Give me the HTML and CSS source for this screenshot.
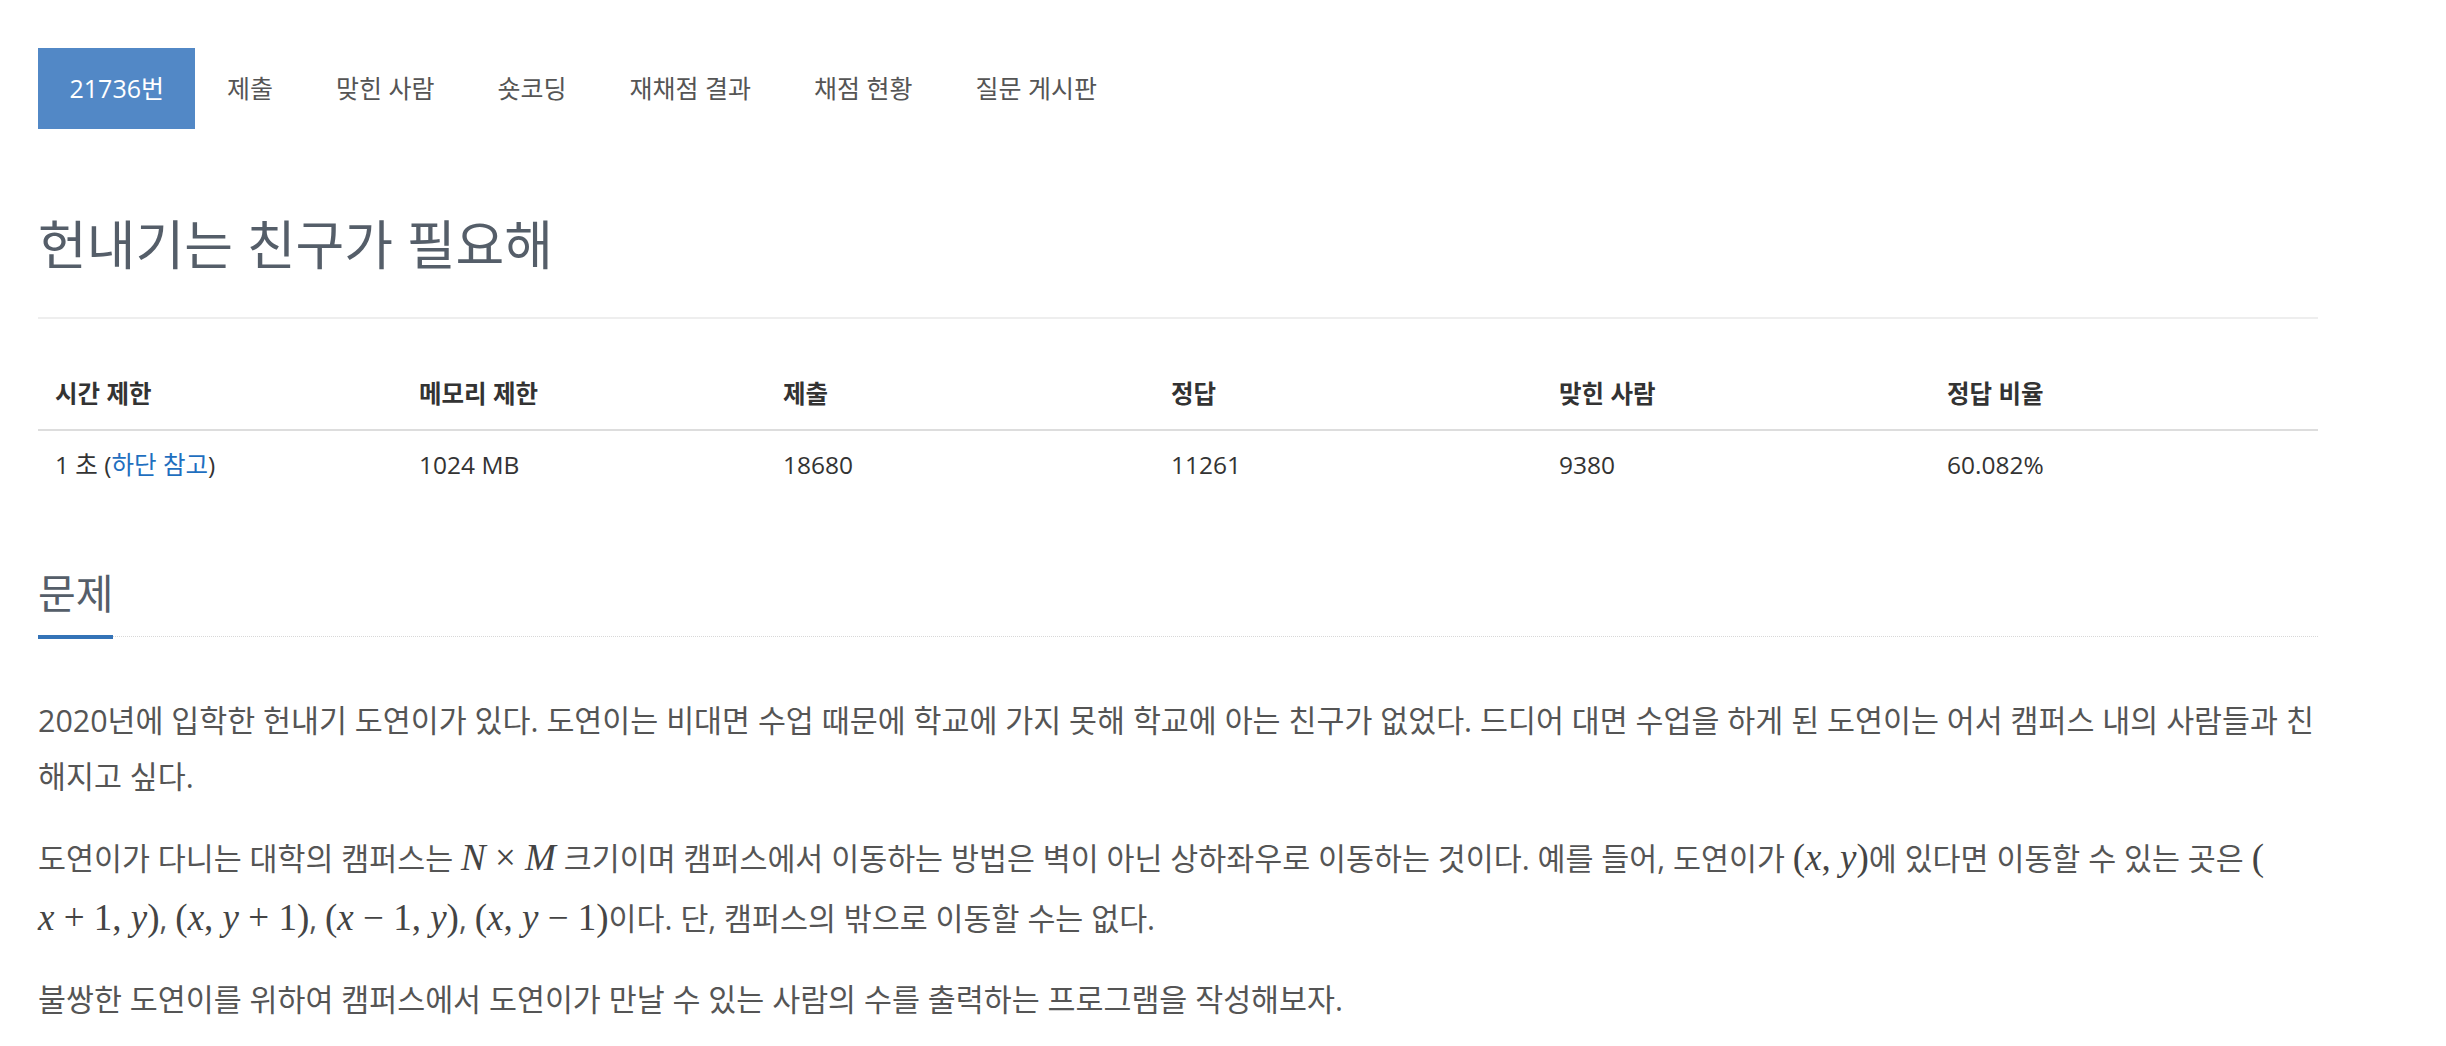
FILE: index.html
```html
<!DOCTYPE html>
<html lang="ko">
<head>
<meta charset="utf-8">
<title>21736번: 헌내기는 친구가 필요해</title>
<link rel="stylesheet" href="styles.css">
</head>
<body>
<div class="container">
  <ul class="problem-menu">
    <li class="active"><a href="#">21736번</a></li>
    <li><a href="#">제출</a></li>
    <li><a href="#">맞힌 사람</a></li>
    <li><a href="#">숏코딩</a></li>
    <li><a href="#">재채점 결과</a></li>
    <li><a href="#">채점 현황</a></li>
    <li><a href="#">질문 게시판</a></li>
  </ul>

  <div class="page-header">
    <h1 class="problem-title">헌내기는 친구가 필요해</h1>
  </div>

  <table class="problem-info">
    <colgroup>
      <col class="c1"><col class="c2"><col class="c3"><col class="c4"><col class="c5"><col class="c6">
    </colgroup>
    <thead>
      <tr>
        <th>시간 제한</th>
        <th>메모리 제한</th>
        <th>제출</th>
        <th>정답</th>
        <th>맞힌 사람</th>
        <th>정답 비율</th>
      </tr>
    </thead>
    <tbody>
      <tr>
        <td>1 초 (<a href="#" class="link">하단 참고</a>)</td>
        <td>1024 MB</td>
        <td>18680</td>
        <td>11261</td>
        <td>9380</td>
        <td>60.082%</td>
      </tr>
    </tbody>
  </table>

  <section class="problem-section">
    <div class="headline">
      <h2>문제</h2>
    </div>
    <div class="problem-text">
      <p>2020년에 입학한 헌내기 도연이가 있다. 도연이는 비대면 수업 때문에 학교에 가지 못해 학교에 아는 친구가 없었다. 드디어 대면 수업을 하게 된 도연이는 어서 캠퍼스 내의 사람들과 친해지고 싶다.</p>
      <p>도연이가 다니는 대학의 캠퍼스는 <span class="math"><i>N</i> <span class="op">×</span> <i>M</i></span> 크기이며 캠퍼스에서 이동하는 방법은 벽이 아닌 상하좌우로 이동하는 것이다. 예를 들어, 도연이가 <span class="math">(<i>x</i>, <i>y</i>)</span>에 있다면 이동할 수 있는 곳은 <span class="math">(</span><br><span class="math tall"><i>x</i> <span class="op">+</span> 1, <i>y</i>)</span>, <span class="math">(<i>x</i>, <i>y</i> <span class="op">+</span> 1)</span>, <span class="math">(<i>x</i> <span class="op">−</span> 1, <i>y</i>)</span>, <span class="math">(<i>x</i>, <i>y</i> <span class="op">−</span> 1)</span>이다. 단, 캠퍼스의 밖으로 이동할 수는 없다.</p>
      <p>불쌍한 도연이를 위하여 캠퍼스에서 도연이가 만날 수 있는 사람의 수를 출력하는 프로그램을 작성해보자.</p>
    </div>
  </section>
</div>
</body>
</html>
```

FILE: styles.css
```css
html, body {
  margin: 0;
  padding: 0;
  background: #ffffff;
}

body {
  font-family: "Open Sans", "Noto Sans CJK KR", sans-serif;
  color: #333333;
}

.container {
  width: 2280px;
  padding: 48px 0 0 38px;
}

/* ---------- tab menu ---------- */
.problem-menu {
  list-style: none;
  margin: 0;
  padding: 0;
  display: flex;
  height: 81px;
}

.problem-menu a {
  display: block;
  height: 81px;
  line-height: 81px;
  padding: 0 31.5px;
  font-size: 25px;
  color: #555555;
  text-decoration: none;
}

.problem-menu li.active a {
  background: #5288c6;
  color: #ffffff;
}

/* ---------- title ---------- */
.page-header {
  border-bottom: 2px solid #eeeeee;
  padding-bottom: 39px;
}

.problem-title {
  margin: 83px 0 0 0;
  font-size: 53px;
  line-height: 66px;
  font-weight: 400;
  color: #555e69;
}

/* ---------- info table ---------- */
.problem-info {
  width: 2280px;
  margin-top: 40px;
  border-collapse: collapse;
  table-layout: fixed;
  font-size: 24.5px;
}

.problem-info .c1 { width: 364px; }
.problem-info .c2 { width: 364px; }
.problem-info .c3 { width: 388px; }
.problem-info .c4 { width: 388px; }
.problem-info .c5 { width: 388px; }
.problem-info .c6 { width: 388px; }

.problem-info th {
  text-align: left;
  font-weight: 700;
  color: #333333;
  line-height: 32px;
  padding: 19px 17px;
  border-bottom: 2px solid #dddddd;
}

.problem-info td {
  text-align: left;
  color: #333333;
  line-height: 32px;
  padding: 18px 17px;
}

.problem-info .link {
  color: #1f6fbf;
  text-decoration: none;
}

/* ---------- problem section ---------- */
.problem-section {
  margin-top: 73px;
}

.headline {
  border-bottom: 1px dotted #d8d8d8;
}

.headline h2 {
  display: inline-block;
  margin: 0 0 -3px 0;
  padding-bottom: 21px;
  border-bottom: 4px solid #3473b7;
  font-size: 41px;
  line-height: 42px;
  font-weight: 400;
  color: #555e69;
}

.problem-text {
  margin-top: 56px;
  font-size: 30.4px;
  line-height: 56px;
  color: #555555;
}

.problem-text p {
  margin: 0 0 25px 0;
}

.math {
  font-family: "Liberation Serif", "DejaVu Serif", serif;
  font-size: 37px;
  white-space: nowrap;
  color: #444444;
}

.math.tall {
  display: inline-block;
  padding-top: 6px;
  line-height: 50px;
}

.math i {
  font-style: italic;
}

.math .op {
  font-style: normal;
}
```
